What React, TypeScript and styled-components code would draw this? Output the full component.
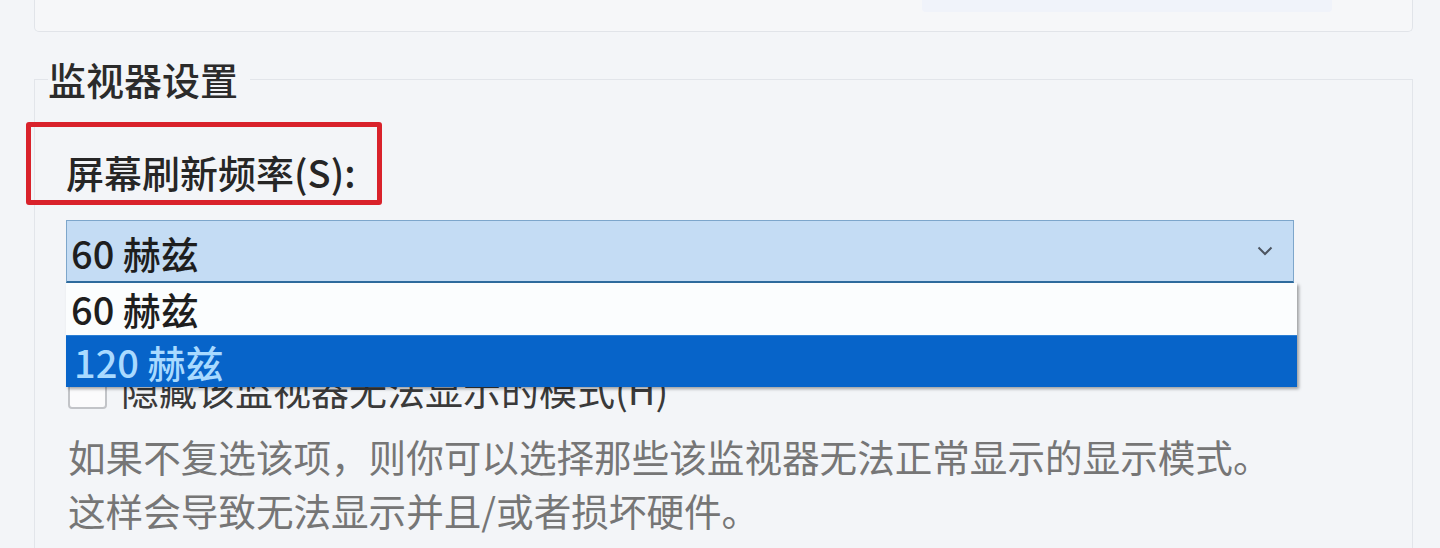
import React from 'react'
import styled, { createGlobalStyle } from 'styled-components'

const GlobalStyle = createGlobalStyle`
    html, body {
        margin: 0;
        padding: 0;
        background: #f3f5f8;
    }
    body {
        font-family: 'Noto Sans CJK SC', 'Noto Sans', sans-serif;
        color: #262626;
        overflow: hidden;
    }
`

const rates = ['60 赫兹', '120 赫兹']

export default function App(): JSX.Element {
    const selected = 1

    return (
        <StyledPage>
            <GlobalStyle />
            <TypeBox>
                <ButtonStub />
            </TypeBox>

            <Group>
                <GroupHead>
                    <GroupTitle>监视器设置</GroupTitle>
                </GroupHead>
                <GroupBody>
                    <FieldLabel>屏幕刷新频率(S):</FieldLabel>

                    <Combo>
                        <ComboValue>{rates[0]}</ComboValue>
                        <Chevron viewBox="0 0 16 10" width="16" height="10">
                            <polyline points="1.5,1.5 8,8 14.5,1.5" fill="none" stroke="#4d5560" strokeWidth="2" />
                        </Chevron>
                        <DropList>
                            {rates.map((rate, i) => (
                                <Option key={rate} $selected={i === selected}>
                                    {rate}
                                </Option>
                            ))}
                        </DropList>
                    </Combo>

                    <CheckRow>
                        <CheckBox />
                        <CheckText>隐藏该监视器无法显示的模式(H)</CheckText>
                    </CheckRow>

                    <Description>
                        如果不复选该项，则你可以选择那些该监视器无法正常显示的显示模式。
                        <br />
                        这样会导致无法显示并且/或者损坏硬件。
                    </Description>
                </GroupBody>
            </Group>
        </StyledPage>
    )
}

const StyledPage = styled.div`
    width: 1440px;
    height: 548px;
    box-sizing: border-box;
    padding: 0 27px 0 34px;
`

const TypeBox = styled.div`
    height: 32px;
    box-sizing: border-box;
    border: 1px solid #e1e4e9;
    border-top: none;
    border-radius: 0 0 5px 5px;
    background: #f6f7f9;
    display: flex;
    justify-content: flex-end;
    align-items: flex-start;
    padding-right: 80px;
`

const ButtonStub = styled.div`
    width: 410px;
    height: 12px;
    border-radius: 0 0 4px 4px;
    background: #f0f3fa;
`

const Group = styled.div`
    margin-top: 28px;
`

const GroupHead = styled.div`
    display: flex;
    height: 38px;

    &::before,
    &::after {
        content: '';
        align-self: flex-end;
        height: 19px;
        box-sizing: border-box;
        border-top: 1px solid #e2e5ea;
    }

    &::before {
        width: 14px;
        border-left: 1px solid #e2e5ea;
    }

    &::after {
        flex: 1;
        border-right: 1px solid #e2e5ea;
    }
`

const GroupTitle = styled.span`
    font-size: 38px;
    line-height: 38px;
    font-weight: 500;
    color: #2b2b2b;
    padding-right: 12px;
    white-space: nowrap;
`

const GroupBody = styled.div`
    border-left: 1px solid #e2e5ea;
    border-right: 1px solid #e2e5ea;
    padding: 50px 118px 20px 31px;
    display: flex;
    flex-direction: column;
    align-items: flex-start;
`

const FieldLabel = styled.span`
    position: relative;
    font-size: 38px;
    line-height: 48px;
    font-weight: 500;
    color: #262626;
    white-space: nowrap;

    &::after {
        content: '';
        position: absolute;
        top: -26px;
        bottom: -9px;
        left: -40px;
        right: -26px;
        border: 5px solid #d9222b;
        border-radius: 3px;
    }
`

const Combo = styled.div`
    position: relative;
    align-self: stretch;
    margin-top: 24px;
    height: 63px;
    box-sizing: border-box;
    display: flex;
    align-items: center;
    justify-content: space-between;
    padding: 4px 20px 0 4px;
    background: #c4dcf4;
    border: 1px solid #7da6cb;
    border-bottom: 2px solid #2f6c9f;
`

const ComboValue = styled.span`
    font-size: 38px;
    line-height: 48px;
    font-weight: 500;
    color: #1e1e1e;
`

const Chevron = styled.svg`
    display: block;
    margin-top: -4px;
`

const DropList = styled.div`
    position: absolute;
    top: calc(100% + 2px);
    left: -1px;
    width: calc(100% + 5px);
    box-shadow: 2px 2px 3px rgba(0, 0, 0, 0.35);
    z-index: 2;
`

const Option = styled.div<{ $selected?: boolean }>`
    height: 52px;
    box-sizing: border-box;
    display: flex;
    align-items: center;
    padding-left: ${p => (p.$selected ? '8px' : '5px')};
    font-size: 38px;
    line-height: 48px;
    font-weight: 500;
    background: ${p => (p.$selected ? '#0764c9' : '#fbfdfe')};
    color: ${p => (p.$selected ? '#a9daff' : '#1e1e1e')};
    border-top: ${p => (p.$selected ? '1px solid #2b7fd4' : 'none')};
`

const CheckRow = styled.div`
    margin-top: 86px;
    display: flex;
    align-items: center;
    height: 40px;
    margin-left: 2px;
`

const CheckBox = styled.span`
    width: 39px;
    height: 39px;
    box-sizing: border-box;
    border: 2px solid #c2c4c8;
    border-radius: 4px;
    background: #fbfbfc;
`

const CheckText = styled.span`
    margin-left: 14px;
    font-size: 38px;
    line-height: 40px;
    color: #3a3a3a;
    white-space: nowrap;
`

const Description = styled.p`
    margin: 20px 0 0 2px;
    font-size: 37.6px;
    line-height: 54px;
    color: #767676;
    white-space: nowrap;
`
